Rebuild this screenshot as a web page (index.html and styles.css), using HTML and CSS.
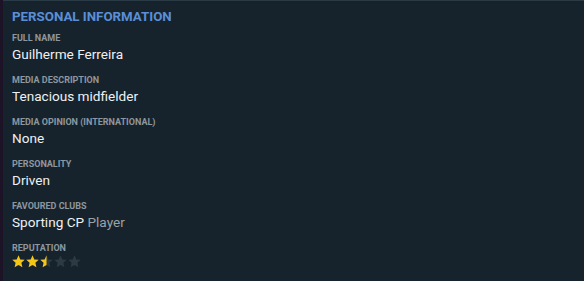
FILE: index.html
```html
<!DOCTYPE html>
<html>
<head>
<meta charset="utf-8">
<link rel="stylesheet" href="styles.css">
</head>
<body>
<div class="frame">
  <div class="edge"></div>
  <div class="panel">
    <div class="topline"></div>
    <div class="content">
      <h2 class="title">PERSONAL INFORMATION</h2>
      <div class="field">
        <div class="label">FULL NAME</div>
        <div class="value">Guilherme Ferreira</div>
      </div>
      <div class="field">
        <div class="label">MEDIA DESCRIPTION</div>
        <div class="value">Tenacious midfielder</div>
      </div>
      <div class="field">
        <div class="label">MEDIA OPINION (INTERNATIONAL)</div>
        <div class="value">None</div>
      </div>
      <div class="field">
        <div class="label">PERSONALITY</div>
        <div class="value">Driven</div>
      </div>
      <div class="field">
        <div class="label">FAVOURED CLUBS</div>
        <div class="value">Sporting CP <span class="muted">Player</span></div>
      </div>
      <div class="field">
        <div class="label">REPUTATION</div>
        <div class="stars">
          <svg width="72" height="13" viewBox="0 0 72 13">
            <defs>
              <path id="st" d="M6.5 0.3 L8.3 4.4 L12.7 4.8 L9.4 7.8 L10.4 12.2 L6.5 9.9 L2.6 12.2 L3.6 7.8 L0.3 4.8 L4.7 4.4 Z"/>
              <clipPath id="half"><rect x="0" y="0" width="6.5" height="13"/></clipPath>
            </defs>
            <use href="#st" x="0" fill="#f5c518"/>
            <use href="#st" x="14" fill="#f5c518"/>
            <use href="#st" x="28" fill="#2c3a43"/>
            <g transform="translate(28 0)"><use href="#st" fill="#f5c518" clip-path="url(#half)"/></g>
            <use href="#st" x="42" fill="#2c3a43"/>
            <use href="#st" x="56" fill="#2c3a43"/>
          </svg>
        </div>
      </div>
    </div>
  </div>
</div>
</body>
</html>
```
FILE: styles.css
```css
html, body {
  margin: 0;
  padding: 0;
  width: 584px;
  height: 281px;
  overflow: hidden;
  background: #16232c;
}
.frame {
  display: flex;
  height: 281px;
}
.edge {
  width: 3px;
  background: #1d1326;
  flex: none;
}
.panel {
  flex: 1;
  background: #16232c;
  display: flex;
  flex-direction: column;
}
.topline {
  height: 2px;
  background: #1b4a40;
  border-bottom: 1px solid #2a3b45;
}
.content {
  padding: 8px 0 0 9px;
  font-family: Roboto, "Noto Sans", sans-serif;
}
.title {
  margin: 0 0 7px;
  font-size: 13.3px;
  font-weight: 700;
  color: #5a8fd8;
  line-height: 16px;
  letter-spacing: 0;
}
.field {
  margin-bottom: 12px;
}
.label {
  font-size: 9px;
  font-weight: 700;
  color: #8e979f;
  line-height: 12px;
}
.value {
  font-size: 13.6px;
  color: #eef1f3;
  line-height: 18px;
  padding-top: 1px;
  margin-bottom: -1px;
}
.muted {
  color: #9aa2a9;
}
.stars {
  height: 16px;
  padding-top: 1px;
}
.stars svg {
  display: block;
}
```
